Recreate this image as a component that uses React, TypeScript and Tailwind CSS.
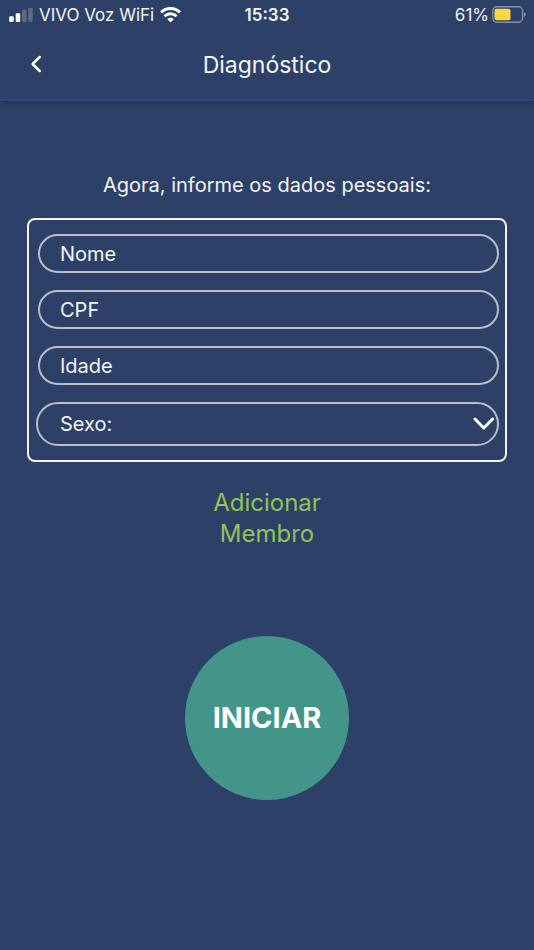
/**
 * Diagnosis screen: personal data form with the start button.
 */

import { useState } from "react";

interface FieldProps {
  label: string;
  value: string;
  onChange: (value: string) => void;
  inputMode?: "text" | "numeric";
}

function Field({ label, value, onChange, inputMode = "text" }: FieldProps) {
  return (
    <input
      type="text"
      aria-label={label}
      placeholder={label}
      inputMode={inputMode}
      value={value}
      onChange={(e) => onChange(e.target.value)}
      className="ml-0.5 h-[39px] rounded-full border-2 border-[#b9bdcb] bg-transparent px-5 text-xl text-gray-100 outline-none placeholder:text-gray-100 placeholder:opacity-100"
    />
  );
}

function StatusBar() {
  return (
    <div className="grid h-8 grid-cols-3 items-center px-2 text-[17px] text-gray-100">
      <div className="flex items-center gap-1.5 whitespace-nowrap">
        <svg width="25" height="16" viewBox="0 0 25 16" fill="white" className="shrink-0">
          <rect x="1.2" y="8.3" width="4.5" height="5.7" rx="1" />
          <rect x="7.7" y="5.2" width="4.5" height="8.8" rx="1" />
          <rect x="14" y="1.8" width="4.5" height="12.2" rx="1" opacity="0.22" />
          <rect x="20.2" y="-0.8" width="4.5" height="14.8" rx="1" opacity="0.22" />
        </svg>
        <span>VIVO Voz WiFi</span>
        <svg width="21" height="18" viewBox="0 0 21 18" fill="none" stroke="white" className="shrink-0">
          <path d="M1.1 5.4a13.4 13.4 0 0 1 18.8 0" strokeWidth="3" />
          <path d="M4.5 9.2a8.6 8.6 0 0 1 12 0" strokeWidth="2.8" />
          <path d="M10.500 15.500l-3.200-3.300a4.500 4.500 0 0 1 6.400 0z" fill="white" stroke="none" />
        </svg>
      </div>
      <div className="text-center font-semibold">15:33</div>
      <div className="flex items-center justify-end gap-[3px]">
        <span>61%</span>
        <svg width="34" height="20" viewBox="0 0 34 20" fill="none">
          <rect x="0.8" y="0.8" width="29.8" height="15.4" rx="4" stroke="#8590ab" strokeWidth="1.4" />
          <rect x="2.5" y="2.8" width="16" height="11.4" rx="2" fill="#fbd743" />
          <path d="M32 6v5q1.7-.7 1.7-2.5T32 6z" fill="#8590ab" />
        </svg>
      </div>
    </div>
  );
}

export default function App() {
  const [name, setName] = useState("");
  const [cpf, setCpf] = useState("");
  const [age, setAge] = useState("");
  const [sex, setSex] = useState("");

  return (
    <div className="flex min-h-screen flex-col bg-[#2d4067] font-['Inter',sans-serif] text-gray-100">
      <header className="border-b-2 border-[#34428a] shadow-[0_2px_5px_rgba(0,0,0,0.3)]">
        <StatusBar />
        <div className="grid h-[67px] grid-cols-[72px_1fr_72px] items-center">
          <button type="button" aria-label="Voltar" className="flex h-full items-center justify-center pb-1">
            <svg width="12" height="18" viewBox="0 0 12 18" fill="none" stroke="white" strokeWidth="2.5">
              <path d="M9.7 2L2.6 9l7.1 7" strokeLinecap="round" strokeLinejoin="round" />
            </svg>
          </button>
          <h1 className="text-center text-[23px]">Diagnóstico</h1>
        </div>
      </header>

      <main className="flex flex-col items-center px-[27px] pt-[70px]">
        <p className="text-xl">Agora, informe os dados pessoais:</p>

        {/* Personal data */}
        <form className="mt-[19px] flex w-full flex-col gap-[17px] rounded-lg border-2 border-gray-100 py-[14px] pr-1.5 pl-[7px]">
          <Field label="Nome" value={name} onChange={setName} />
          <Field label="CPF" value={cpf} onChange={setCpf} inputMode="numeric" />
          <Field label="Idade" value={age} onChange={setAge} inputMode="numeric" />
          <div className="grid items-center">
            <select
              aria-label="Sexo"
              value={sex}
              onChange={(e) => setSex(e.target.value)}
              className="col-start-1 row-start-1 h-11 w-full appearance-none rounded-full border-2 border-[#b9bdcb] bg-transparent px-[22px] text-xl text-gray-100 outline-none"
            >
              <option value="">Sexo:</option>
              <option value="f">Feminino</option>
              <option value="m">Masculino</option>
            </select>
            <svg
              width="22"
              height="14"
              viewBox="0 0 22 14"
              fill="none"
              stroke="white"
              strokeWidth="3"
              className="pointer-events-none col-start-1 row-start-1 mr-1 justify-self-end"
            >
              <path d="M2 2l8.800 9L19.600 2" strokeLinecap="round" strokeLinejoin="round" />
            </svg>
          </div>
        </form>

        <button type="button" className="mt-[25px] w-32 text-2xl leading-[31px] text-[#93c255]">
          Adicionar Membro
        </button>

        <button
          type="button"
          className="mt-[87px] size-[164px] rounded-full bg-[#439589] text-[29px] font-bold text-white"
        >
          INICIAR
        </button>
      </main>
    </div>
  );
}
